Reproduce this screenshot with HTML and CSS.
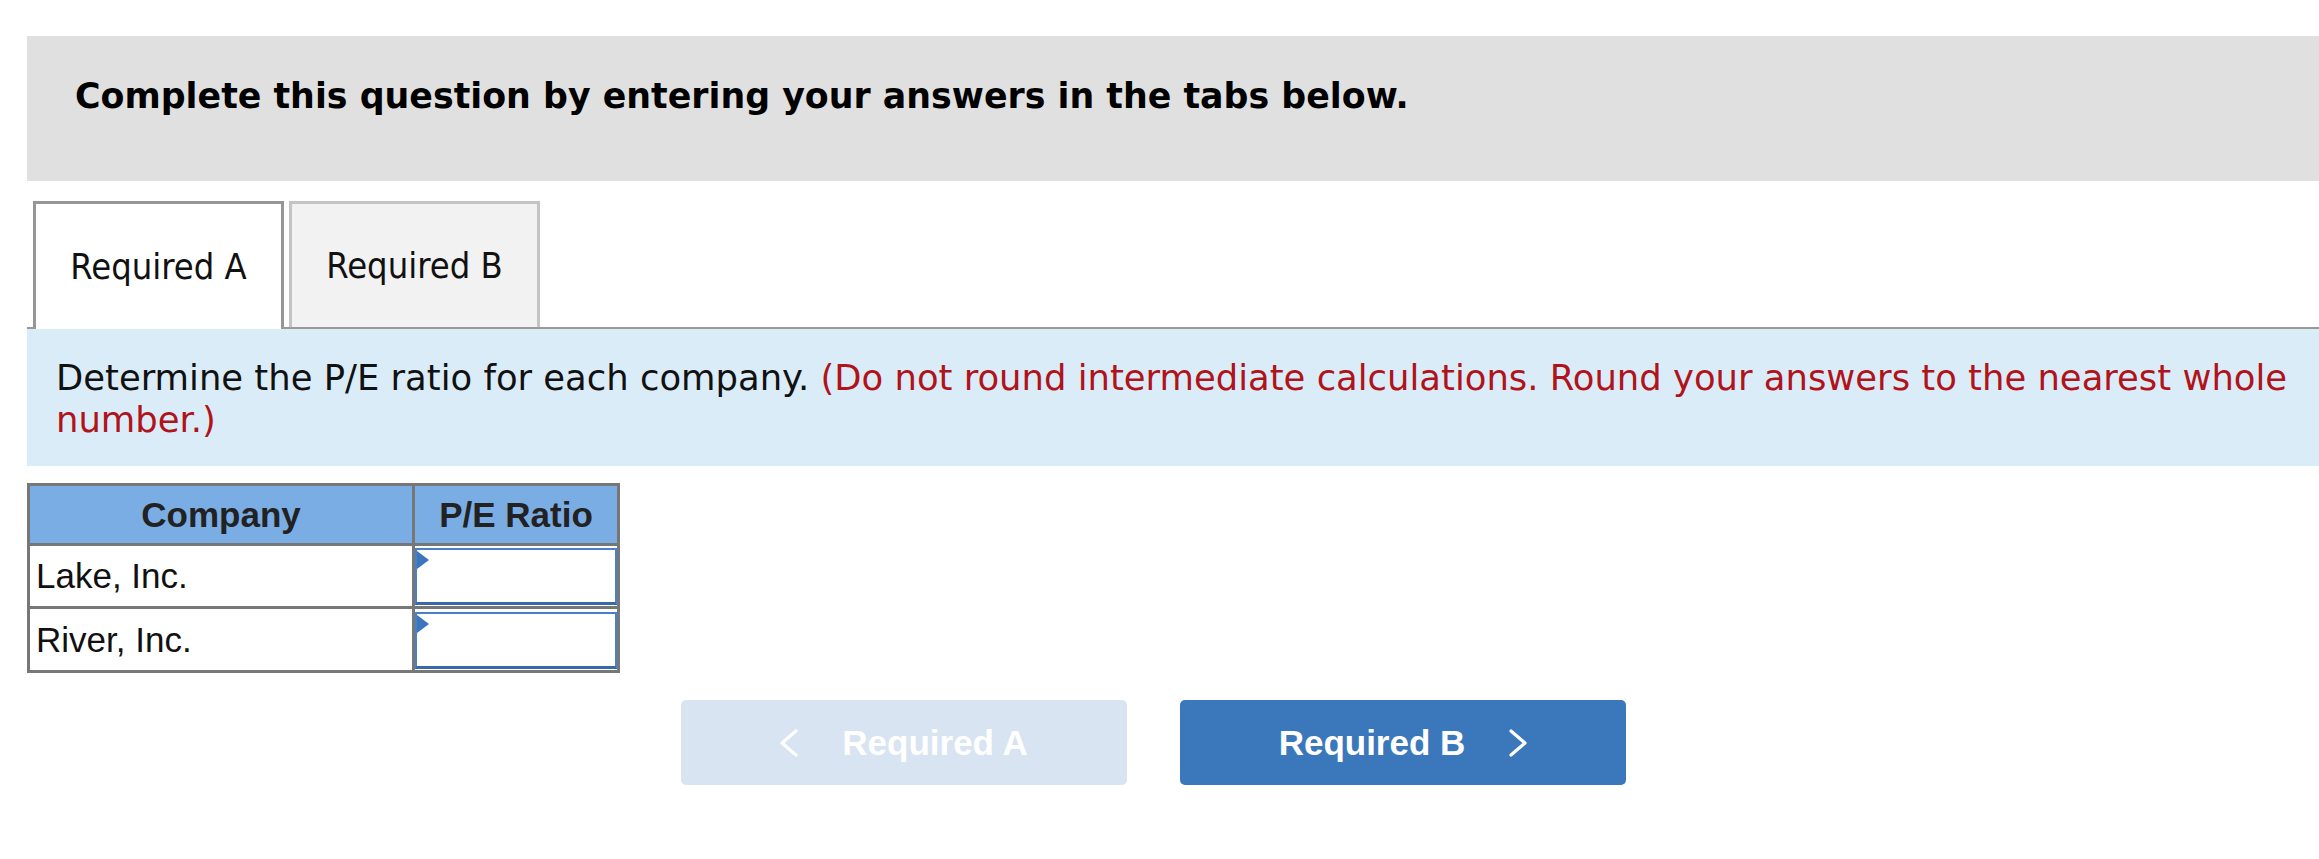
FILE: index.html
```html
<!DOCTYPE html>
<html lang="en">
<head>
<meta charset="utf-8">
<title>Required A</title>
<link rel="stylesheet" href="styles.css">
</head>
<body>
<div class="page">
  <div class="banner">
    <h1 class="banner-title">Complete this question by entering your answers in the tabs below.</h1>
  </div>

  <div class="tabs">
    <div class="tab tab-active"><span class="tab-label">Required A</span></div>
    <div class="tab tab-idle"><span class="tab-label">Required B</span></div>
  </div>

  <div class="instructions">
    <p class="instr-text">Determine the P/E ratio for each company. <span class="instr-red">(Do not round intermediate calculations. Round your answers to the nearest whole number.)</span></p>
  </div>

  <table class="pe-table">
    <colgroup>
      <col class="col-company">
      <col class="col-ratio">
    </colgroup>
    <thead>
      <tr class="head-row">
        <th>Company</th>
        <th>P/E Ratio</th>
      </tr>
    </thead>
    <tbody>
      <tr class="data-row row-1">
        <td class="name-cell">Lake, Inc.</td>
        <td class="input-cell"><div class="answer"><span class="flag"></span></div></td>
      </tr>
      <tr class="data-row row-2">
        <td class="name-cell">River, Inc.</td>
        <td class="input-cell"><div class="answer"><span class="flag"></span></div></td>
      </tr>
    </tbody>
  </table>

  <div class="nav">
    <button class="nav-btn nav-prev" type="button">
      <svg class="chev" width="18" height="28" viewBox="0 0 18 28"><polyline points="16,2 2,14 16,26" fill="none" stroke="#ffffff" stroke-width="3.2" stroke-linecap="round" stroke-linejoin="round"/></svg>
      <span class="nav-label">Required A</span>
    </button>
    <button class="nav-btn nav-next" type="button">
      <span class="nav-label">Required B</span>
      <svg class="chev" width="18" height="28" viewBox="0 0 18 28"><polyline points="2,2 16,14 2,26" fill="none" stroke="#ffffff" stroke-width="3.2" stroke-linecap="round" stroke-linejoin="round"/></svg>
    </button>
  </div>
</div>
</body>
</html>
```

FILE: styles.css
```css
html, body {
  margin: 0;
  padding: 0;
  background: #ffffff;
}

.page {
  padding: 36px 0 0 27px;
}

.banner {
  background: #e0e0e0;
  height: 145px;
  box-sizing: border-box;
  padding: 40px 0 0 48px;
}

.banner-title {
  margin: 0;
  font-family: "DejaVu Sans", Verdana, sans-serif;
  font-weight: bold;
  font-size: 34.8px;
  line-height: 40px;
  color: #000000;
}

.tabs {
  display: flex;
  align-items: flex-start;
  gap: 5px;
  margin-top: 20px;
  padding-left: 6px;
  border-bottom: 2px solid #999999;
  height: 126px;
}

.tab {
  box-sizing: border-box;
  width: 251px;
  display: flex;
  align-items: center;
  justify-content: center;
  overflow: hidden;
}

.tab-label {
  font-family: "DejaVu Sans Condensed", "DejaVu Sans", sans-serif;
  font-stretch: condensed;
  font-size: 36px;
  line-height: 40px;
  white-space: nowrap;
  color: #111111;
}

.tab-active {
  height: 128px;
  background: #ffffff;
  border: 3px solid #969696;
  border-bottom: none;
  position: relative;
  z-index: 1;
}

.tab-idle {
  height: 126px;
  background: #f2f2f2;
  border: 3px solid #c4c4c4;
  border-bottom: none;
}

.instructions {
  background: #dbecf9;
  padding: 28px 10px 25px 29px;
}

.instr-text {
  margin: 0;
  font-family: "DejaVu Sans", Verdana, sans-serif;
  font-size: 35.4px;
  line-height: 42px;
  color: #111111;
}

.instr-red {
  color: #b0131a;
}

.pe-table {
  margin-top: 17px;
  border-collapse: separate;
  border-spacing: 3px;
  background: #777777;
  table-layout: fixed;
  width: 593px;
  font-family: "Liberation Sans", Arial, sans-serif;
  font-size: 35px;
}

.col-company { width: 382px; }
.col-ratio { width: 202px; }

.head-row th {
  background: #7aade4;
  height: 57px;
  padding: 0;
  font-weight: bold;
  color: #222222;
  text-align: center;
  vertical-align: middle;
}

.data-row td {
  background: #ffffff;
  padding: 0;
  vertical-align: middle;
}

.row-1 td { height: 59px; }
.row-2 td { height: 60px; }

.name-cell {
  padding-left: 6px !important;
  color: #111111;
}

.input-cell {
  padding: 1px 0 0 0 !important;
}

.answer {
  position: relative;
  box-sizing: border-box;
  height: 57px;
  border: 2px solid #4a80c4;
  border-bottom: 3px solid #3a6aa6;
  background: #ffffff;
}

.flag {
  position: absolute;
  left: 0;
  top: 1px;
  width: 0;
  height: 0;
  border-top: 9px solid transparent;
  border-bottom: 9px solid transparent;
  border-left: 12px solid #3a75bd;
}

.nav {
  display: flex;
  gap: 53px;
  margin-top: 27px;
  padding-left: 654px;
}

.nav-btn {
  box-sizing: border-box;
  width: 446px;
  height: 85px;
  border: none;
  border-radius: 5px;
  display: flex;
  align-items: center;
  justify-content: center;
  gap: 44px;
  padding: 0;
  font-family: "Liberation Sans", Arial, sans-serif;
  font-weight: bold;
  font-size: 35px;
  color: #ffffff;
}

.nav-prev {
  background: #d8e4f1;
}

.nav-next {
  background: #3b77bb;
}

.chev {
  display: block;
  flex: none;
}
```
